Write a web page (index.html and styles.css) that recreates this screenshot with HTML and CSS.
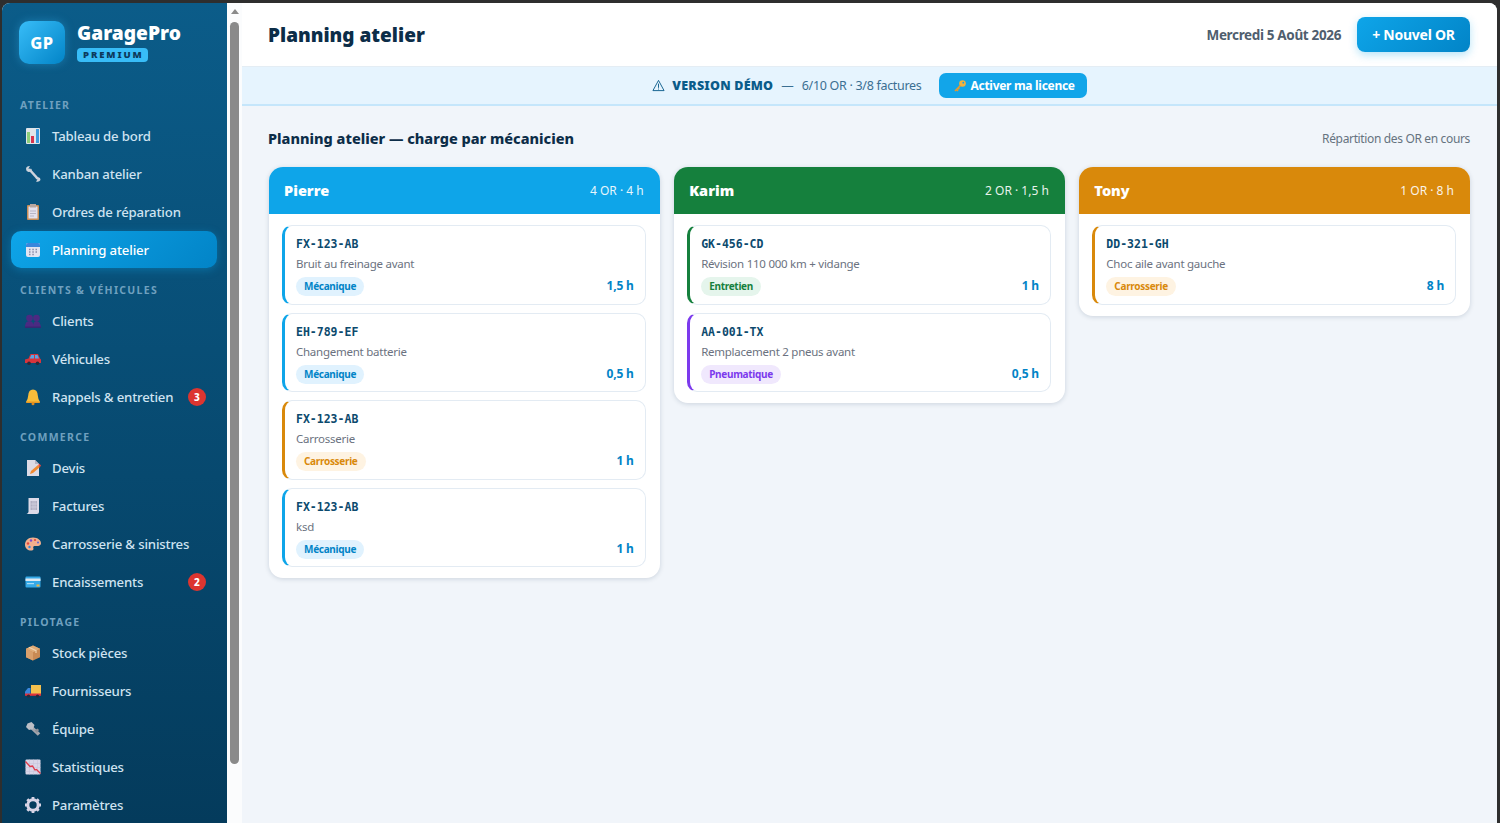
FILE: index.html
```html
<!DOCTYPE html>
<html lang="fr">
<head>
  <meta charset="utf-8">
  <title>GaragePro</title>
  <link rel="stylesheet" href="styles.css">
</head>
<body>
  <div class="app">
    <aside class="sidebar">
      <div class="brand">
        <div class="brand-logo">GP</div>
        <div>
          <div class="brand-name">GaragePro</div>
          <div class="brand-tag">PREMIUM</div>
        </div>
      </div>

      <div class="nav-label">ATELIER</div>
      <a class="nav-item"><svg class="ico" viewBox="0 0 18 18"><rect x="2" y="1" width="14" height="16" rx="1" fill="#dfe5ea"/><rect x="3" y="5" width="3" height="11" fill="#8ccf7a"/><rect x="7" y="9" width="3" height="7" fill="#d8344e"/><rect x="12" y="2" width="3" height="14" fill="#3b9be0"/></svg>Tableau de bord</a>
      <a class="nav-item"><svg class="ico" viewBox="0 0 18 18"><path d="M5 4 L14 14" stroke="#cdd3dc" stroke-width="2.6" fill="none"/><path d="M2 4 Q2 1 6 1 L4.500 3.500 L6.500 5.500 L8 3.500 Q8 7 4.500 7 Q2 6.500 2 4Z" fill="#cdd3dc"/><path d="M16.500 15 Q15 17.500 12 16.500 L13.500 14.500 L11.500 13 Q13.500 11.500 16 13Z" fill="#cdd3dc"/></svg>Kanban atelier</a>
      <a class="nav-item"><svg class="ico" viewBox="0 0 18 18"><rect x="3" y="2" width="12" height="15" rx="1" fill="#c98d57"/><rect x="4.500" y="3.500" width="9" height="12" fill="#e4e1ee"/><rect x="6" y="1" width="6" height="3.500" fill="#b9a7a0"/><path d="M6 8h6M6 10.500h6M6 13h4" stroke="#b8b5c6"/></svg>Ordres de réparation</a>
      <a class="nav-item active"><svg class="ico" viewBox="0 0 18 18"><rect x="2" y="2" width="14" height="14" rx="2" fill="#e3e4f1"/><path d="M2 6V4a2 2 0 0 1 2-2h10a2 2 0 0 1 2 2v2z" fill="#3a86dc"/><path d="M5 8.500h1.500M8.300 8.500h1.500M11.500 8.500h1.500M5 11h1.500M8.300 11h1.500M11.500 11h1.500M5 13.500h1.500M8.300 13.500h1.500" stroke="#8b8aa8" stroke-width="1.400"/></svg>Planning atelier</a>

      <div class="nav-label">CLIENTS &amp; VÉHICULES</div>
      <a class="nav-item"><svg class="ico" viewBox="0 0 18 18"><g fill="#4b2a82"><circle cx="5.500" cy="6" r="3.300"/><circle cx="12.500" cy="6" r="3.300"/><path d="M1 15q0-6 4.500-6t3.500 6zM9 15q0-6 3.500-6t4.500 6z"/></g><rect x="1" y="14.500" width="16" height="1.400" fill="#3c2472"/></svg>Clients</a>
      <a class="nav-item"><svg class="ico" viewBox="0 0 18 18"><path d="M1 13V9.500l3.500-1 2-4.500h7.500l2 4.500 1 1V13z" fill="#d8343c"/><path d="M7.200 5h2.800v3.500H5.700zM11 5h2.500L15 8.500h-4z" fill="#5aa6e8"/><circle cx="5" cy="13.300" r="1.800" fill="#2a2a3a"/><circle cx="13.500" cy="13.300" r="1.800" fill="#2a2a3a"/></svg>Véhicules</a>
      <a class="nav-item has-badge"><svg class="ico" viewBox="0 0 18 18"><path d="M9 1.500q-4.500 0-4.800 6-.2 3.500-2.200 6.500h14q-2-3-2.200-6.500-.3-6-4.800-6z" fill="#f8bd3a"/><rect x="2" y="13.500" width="14" height="1.500" rx=".7" fill="#e79a23"/><circle cx="9" cy="15.800" r="1.500" fill="#e08a1e"/></svg>Rappels &amp; entretien<span class="count">3</span></a>

      <div class="nav-label">COMMERCE</div>
      <a class="nav-item"><svg class="ico" viewBox="0 0 18 18"><path d="M3 1h8l4 4v12H3z" fill="#dcdbe6"/><path d="M11 1l4 4h-4z" fill="#b5b4c4"/><path d="M6 15l1-3 7-6 2 2-7 6z" fill="#f08a32"/><path d="M14 6l1.500-1.300 1.500 1.800L16 8z" fill="#e8463c"/></svg>Devis</a>
      <a class="nav-item"><svg class="ico" viewBox="0 0 18 18"><path d="M4.500 1h10.500v14q0 2-2 2H2.500q1.500-.5 2-2z" fill="#dcdae8"/><rect x="6.500" y="4" width="6.500" height="9" fill="#b0aec2"/><path d="M6.500 7h6.500M6.500 10h6.500M9 4v9M11 4v9" stroke="#dcdae8" stroke-width=".6"/></svg>Factures</a>
      <a class="nav-item"><svg class="ico" viewBox="0 0 18 18"><path d="M9 2.500C4 2.500.8 6 1 10c.2 3.500 3.500 6 7 5.500 2-.3 1.500-2 1.200-3-.3-1.200 1-1.700 2.800-1.500 2.500.2 4.800-.5 5-2.500C17.200 5.500 14 2.500 9 2.500z" fill="#f2b08e"/><circle cx="7" cy="5.500" r="1.200" fill="#7b4fd0"/><circle cx="11" cy="5" r="1.100" fill="#e8463c"/><circle cx="4" cy="8.500" r="1.200" fill="#e8463c"/><circle cx="5.500" cy="12" r="1.200" fill="#3a86dc"/><circle cx="14" cy="7.500" r="1" fill="#5b63d8"/></svg>Carrosserie &amp; sinistres</a>
      <a class="nav-item has-badge"><svg class="ico" viewBox="0 0 18 18"><rect x="1.500" y="3.500" width="15" height="11" rx="1" fill="#35a9e8"/><rect x="1.500" y="5.500" width="15" height="2.500" fill="#dfe8f0"/><rect x="3" y="10" width="7" height="1.200" fill="#a8dcf5"/><rect x="12.500" y="11.500" width="3" height="2" fill="#f2b43a"/></svg>Encaissements<span class="count">2</span></a>

      <div class="nav-label">PILOTAGE</div>
      <a class="nav-item"><svg class="ico" viewBox="0 0 18 18"><path d="M9 1.500l7 3.300v8.500L9 16.500l-7-3.200V4.800z" fill="#c98a54"/><path d="M9 8.200L2 4.800l7-3.300 7 3.300z" fill="#e0ac78"/><path d="M9 8.200v8.300l-7-3.200V4.800z" fill="#d9a06c"/><path d="M5 3.300l7 3.300v2.500" stroke="#f0d3ae" stroke-width="1.200" fill="none"/></svg>Stock pièces</a>
      <a class="nav-item"><svg class="ico" viewBox="0 0 18 18"><rect x="7" y="3" width="10" height="9" fill="#f4c04e"/><path d="M6.500 6H4L1 9.500V13h5.500z" fill="#3a86dc"/><rect x="1" y="11.500" width="16" height="2.300" fill="#e0323c"/><circle cx="4.500" cy="14" r="1.600" fill="#2a2a3a"/><circle cx="13.500" cy="14" r="1.600" fill="#2a2a3a"/></svg>Fournisseurs</a>
      <a class="nav-item"><svg class="ico" viewBox="0 0 18 18"><path d="M7 7L15 14.500" stroke="#a3a6ad" stroke-width="3.600"/><path d="M3.500 3.500l4-1.500 3 3-1.500 4-4 1-3-3z" fill="#bcbfc6"/><path d="M10.500 10.500l3-2 1.500 1.500-2 3z" fill="#8d9098"/></svg>Équipe</a>
      <a class="nav-item"><svg class="ico" viewBox="0 0 18 18"><rect x="1.500" y="1.500" width="15" height="15" rx="1" fill="#d9d6e8"/><path d="M1.500 5.500h15M1.500 9.500h15M1.500 13.500h15M5.500 1.500v15M9.500 1.500v15M13.500 1.500v15" stroke="#c4c1d8" stroke-width=".5"/><path d="M1.500 3.500L6 8.500l2.500-.5 2.500 4 1.500-.5 4 4" stroke="#e03a4a" stroke-width="1.300" fill="none"/></svg>Statistiques</a>
      <a class="nav-item"><svg class="ico" viewBox="0 0 18 18"><circle cx="9" cy="9" r="5.200" fill="none" stroke="#d8d4e6" stroke-width="3"/><path d="M9 1v3M9 14v3M1 9h3M14 9h3M3.300 3.300l2.200 2.200M12.500 12.500l2.200 2.200M14.700 3.300l-2.200 2.200M5.500 12.500l-2.200 2.200" stroke="#d8d4e6" stroke-width="2.800"/></svg>Paramètres</a>
    </aside>

    <div class="scrollbar">
      <div class="scroll-arrow"></div>
      <div class="scroll-thumb"></div>
    </div>

    <main class="main">
      <header class="topbar">
        <h1>Planning atelier</h1>
        <div class="topbar-right">
          <span class="date">Mercredi 5 Août 2026</span>
          <button class="btn-new">+ Nouvel OR</button>
        </div>
      </header>

      <div class="demo-banner">
        <svg class="warn" viewBox="0 0 14 14"><path d="M7 1.500L13 12.500H1z" fill="none" stroke="#0b5c8a"/><path d="M7 5v4.500M7 10.300v1" stroke="#0b5c8a"/></svg>
        <strong>VERSION DÉMO</strong>
        <span class="dash">—</span>
        <span class="demo-count">6/10 OR · 3/8 factures</span>
        <button class="btn-licence"><svg class="key" viewBox="0 0 14 14"><circle cx="9.500" cy="4.500" r="3.300" fill="#f4b23e"/><circle cx="10.300" cy="3.700" r=".9" fill="#12a5e9"/><path d="M7.500 6.500L2 12M3.500 10.500l1.500 1.500M5 9l1.200 1.200" stroke="#e99a2c" stroke-width="1.700"/></svg>Activer ma licence</button>
      </div>

      <section class="content">
        <div class="section-head">
          <h2>Planning atelier — charge par mécanicien</h2>
          <span class="section-note">Répartition des OR en cours</span>
        </div>

        <div class="columns">
          <div class="col">
            <div class="col-head blue"><span class="col-name">Pierre</span><span class="col-meta">4 OR · 4 h</span></div>
            <div class="col-body">
              <div class="job job-blue">
                <div class="plate">FX-123-AB</div>
                <div class="desc">Bruit au freinage avant</div>
                <div class="job-foot"><span class="chip chip-blue">Mécanique</span><span class="hours">1,5 h</span></div>
              </div>
              <div class="job job-blue">
                <div class="plate">EH-789-EF</div>
                <div class="desc">Changement batterie</div>
                <div class="job-foot"><span class="chip chip-blue">Mécanique</span><span class="hours">0,5 h</span></div>
              </div>
              <div class="job job-orange">
                <div class="plate">FX-123-AB</div>
                <div class="desc">Carrosserie</div>
                <div class="job-foot"><span class="chip chip-orange">Carrosserie</span><span class="hours">1 h</span></div>
              </div>
              <div class="job job-blue">
                <div class="plate">FX-123-AB</div>
                <div class="desc">ksd</div>
                <div class="job-foot"><span class="chip chip-blue">Mécanique</span><span class="hours">1 h</span></div>
              </div>
            </div>
          </div>

          <div class="col">
            <div class="col-head green"><span class="col-name">Karim</span><span class="col-meta">2 OR · 1,5 h</span></div>
            <div class="col-body">
              <div class="job job-green">
                <div class="plate">GK-456-CD</div>
                <div class="desc">Révision 110 000 km + vidange</div>
                <div class="job-foot"><span class="chip chip-green">Entretien</span><span class="hours">1 h</span></div>
              </div>
              <div class="job job-purple">
                <div class="plate">AA-001-TX</div>
                <div class="desc">Remplacement 2 pneus avant</div>
                <div class="job-foot"><span class="chip chip-purple">Pneumatique</span><span class="hours">0,5 h</span></div>
              </div>
            </div>
          </div>

          <div class="col">
            <div class="col-head orange"><span class="col-name">Tony</span><span class="col-meta">1 OR · 8 h</span></div>
            <div class="col-body">
              <div class="job job-orange">
                <div class="plate">DD-321-GH</div>
                <div class="desc">Choc aile avant gauche</div>
                <div class="job-foot"><span class="chip chip-orange">Carrosserie</span><span class="hours">8 h</span></div>
              </div>
            </div>
          </div>
        </div>
      </section>
    </main>
  </div>
</body>
</html>
```

FILE: styles.css
```css
html,body{height:100%;margin:0;overflow:hidden}
body{background:#2e2e2e;padding:3px 3px 0 2px;box-sizing:border-box;font-family:"Noto Sans",Arial,sans-serif;color:#0c2d48}
.app{display:flex;height:820px;border-radius:8px 8px 0 0;overflow:hidden;background:#f1f5fa}

/* sidebar */
.sidebar{width:225px;flex:none;height:820px;overflow:hidden;box-sizing:border-box;background:linear-gradient(180deg,#0b5c89,#043b5c);padding:18px 10px 0 9px}
.brand{display:flex;gap:12px;padding:0 0 0 8px;margin-bottom:33px}
.brand-logo{width:46px;height:43px;border-radius:10px;background:linear-gradient(135deg,#38bdf8,#0284c7);box-shadow:0 0 10px rgba(56,189,248,.35);color:#fff;font-size:16.5px;font-weight:800;display:flex;align-items:center;justify-content:center;letter-spacing:.5px}
.brand-name{color:#fff;font-size:19.2px;font-weight:900;line-height:24px}
.brand-tag{display:block;width:fit-content;background:#38bdf8;color:#0c3a5c;font-size:9.500px;font-weight:900;letter-spacing:1.900px;line-height:14px;height:14px;padding:0 4px 0 6px;border-radius:4px;margin-top:3px}

.nav-label{color:#6fa0bf;font-size:10.5px;font-weight:700;letter-spacing:1.3px;line-height:16px;padding-left:9px;margin:0 0 4px}
.nav-item{display:flex;align-items:center;height:37px;margin-bottom:1px;padding-left:13px;color:#cfe3f1;font-size:13.2px;font-weight:500;letter-spacing:-.17px;border-radius:10px;box-sizing:border-box}
.nav-item + .nav-label{margin-top:14px}
.nav-item.active{background:linear-gradient(135deg,#0ea5e9,#0284c7);color:#fff;box-shadow:0 2px 8px rgba(14,165,233,.35)}
.ico{width:18px;height:18px;margin-right:10px;flex:none}
.count{margin-left:auto;margin-right:11px;width:18px;height:18px;border-radius:50%;background:#dc3530;color:#fff;font-size:10px;font-weight:800;letter-spacing:0;display:flex;align-items:center;justify-content:center}

/* fake window scrollbar */
.scrollbar{width:15px;flex:none;background:#fbfcfd;display:flex;flex-direction:column;align-items:center;padding-top:6px;box-sizing:border-box}
.scroll-arrow{width:0;height:0;border-left:4px solid transparent;border-right:4px solid transparent;border-bottom:5px solid #8a8a8a;margin-bottom:8px}
.scroll-thumb{width:9px;height:742px;border-radius:5px;background:#8a8a8a}

/* main */
.main{flex:1;min-width:0;display:flex;flex-direction:column}
.topbar{height:63px;background:#fff;border-bottom:1px solid #e4edf4;display:flex;align-items:center;justify-content:space-between;padding:0 27px 0 26px;flex:none}
.topbar h1{margin:0;font-size:19px;font-weight:900;color:#0c2d48}
.topbar-right{display:flex;align-items:center;gap:16px}
.date{font-size:13.500px;font-weight:700;letter-spacing:-.35px;color:#4f5e6e}
.btn-new{width:113px;height:35px;border:none;border-radius:8px;background:linear-gradient(135deg,#0ea5e9,#0284c7);box-shadow:0 3px 8px rgba(14,165,233,.3);color:#fff;font:700 14px "Noto Sans",Arial,sans-serif;letter-spacing:-.25px}

.demo-banner{height:37px;flex:none;background:#e6f4fe;border-bottom:2px solid #c5e6fb;display:flex;align-items:center;justify-content:center;font-size:12.5px;color:#3b6f92}
.warn{width:13px;height:13px;margin-right:7px}
.demo-banner strong{color:#0b5c8a;font-weight:900;font-size:12.5px;letter-spacing:.2px}
.demo-count{letter-spacing:-.3px}
.dash{margin:0 8px}
.btn-licence{display:flex;align-items:center;margin-left:17px;height:25px;padding:0 12px 0 14px;border:none;border-radius:7px;background:#12a5e9;color:#fff;font:700 12px "Noto Sans",Arial,sans-serif;letter-spacing:-.3px}
.key{width:14px;height:14px;margin-right:4px}

.content{padding:0 27px 0 26px;flex:1}
.section-head{display:flex;align-items:center;justify-content:space-between;height:61px;padding-top:3px;box-sizing:border-box}
.section-head h2{margin:0;font-size:14.5px;font-weight:800;color:#0c2d48}
.section-note{font-size:12px;letter-spacing:-.35px;color:#66737f}

.columns{display:grid;grid-template-columns:repeat(3,1fr);gap:14px;align-items:start;margin-left:.5px}
.col{background:#fff;border-radius:14px;overflow:hidden;box-shadow:0 1px 5px rgba(12,45,72,.16)}
.col-head{height:47px;display:flex;align-items:center;justify-content:space-between;padding:0 16px 0 15.5px;color:#fff}
.col-name{font-size:14.5px;font-weight:900;margin-bottom:2px}
.col-meta{font-size:12px;opacity:.9}
.blue{background:#0ea5e9}
.green{background:#15803d}
.orange{background:#d9890b}
.col-body{display:flex;flex-direction:column;gap:8px;padding:11px 14px 11px 13.5px}

.job{height:79.500px;box-sizing:border-box;background:#fff;border:1px solid #e3ebf3;border-left-width:3px;border-radius:10px;padding:10px 11px 0 11px}
.job-blue{border-left-color:#0ea5e9}
.job-orange{border-left-color:#d9890b}
.job-green{border-left-color:#15803d}
.job-purple{border-left-color:#7c3aed}
.plate{font-family:"DejaVu Sans Mono","Liberation Mono",monospace;font-size:11.500px;font-weight:700;line-height:16px;color:#0c4a6e}
.desc{font-size:11.500px;letter-spacing:-.25px;line-height:16px;margin-top:4px;color:#6b7280}
.job-foot{display:flex;align-items:center;justify-content:space-between;margin-top:5px}
.chip{height:19px;line-height:19px;padding:0 8px;border-radius:10px;font-size:10px;letter-spacing:-.3px;font-weight:700}
.chip-blue{background:#e0f2fe;color:#0284c7}
.chip-orange{background:#fef3e2;color:#d9890b}
.chip-green{background:#e5f5ec;color:#15803d}
.chip-purple{background:#f0e8fd;color:#7c3aed}
.hours{font-size:12px;font-weight:700;letter-spacing:-.2px;color:#0284c7;margin-bottom:2px}
```
